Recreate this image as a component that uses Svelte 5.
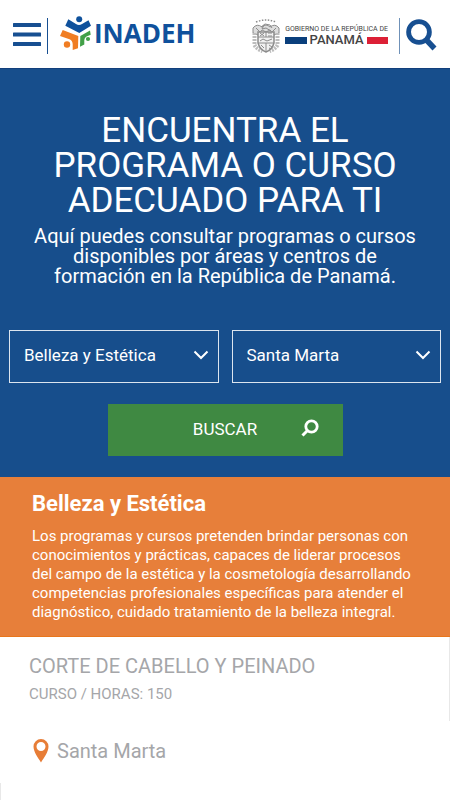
<script lang="ts">
	const areas = ['Belleza y Estética', 'Gastronomía', 'Tecnología'];
	const centers = ['Santa Marta', 'Tocumen', 'Colón'];

	const courses = [
		{ name: 'CORTE DE CABELLO Y PEINADO', kind: 'CURSO', hours: 150, center: 'Santa Marta' },
	];

	let area = $state(areas[0]);
	let center = $state(centers[0]);
</script>

<header class="topbar">
	<button class="topbar__button topbar__button--menu" type="button" aria-label="Menú">
		<svg width="28" height="24" viewBox="0 0 28 24" fill="#174f91">
			<rect width="28" height="4" y="0" rx="0.5" />
			<rect width="28" height="4" y="9.5" rx="0.5" />
			<rect width="28" height="4" y="19" rx="0.5" />
		</svg>
	</button>

	<a class="brand" href="#inicio">
		<svg width="32" height="34" viewBox="0 0 32 34" aria-hidden="true">
			<g fill="#0f519c">
				<circle cx="19.2" cy="3.2" r="3" />
				<path d="M8.3 3.3 16 8Q19 9.800 22 8L28.500 4.300 31 9.800 19.300 17 5.300 9.800Z" />
			</g>
			<g fill="#f07d23">
				<circle cx="7" cy="28.500" r="3.200" />
				<path d="M2.700 14 18.300 20 18 32.300 12.700 34V28.500Q12.700 24.500 9.500 23.300L0 20Z" />
			</g>
			<g fill="#41a047">
				<circle cx="28" cy="23" r="2.100" />
				<path d="M30 14.500 30.700 18.800 26.500 20.500Q24.500 21.500 24.300 24V28.500L20 30.700 20.300 20Z" />
			</g>
		</svg>
		<span class="brand__name">INADEH</span>
	</a>

	<a class="gov" href="#gobierno">
		<svg width="28" height="34" viewBox="0 0 28 34" fill="none" stroke="#8c8c8c" aria-hidden="true">
			<path d="M4 3Q14-1 24 3" stroke-width="1.500" stroke-dasharray="1.500 1.500" />
			<path d="M1 9Q5 4 10 8q4-4 8 0 5-4 9 1v5l-5 2-4-5-4 2-4-2-4 5-5-2Z" fill="#ddd" />
			<path d="M9 8 13 5 18 6 20 9M12 6 10 10 14 9 19 12M4 9l4 4m16-4-4 4" />
			<path d="M2.500 14v12q2 4 8 6m15-18v12q-2 4-8 6" stroke-width="4" stroke="#bdbdbd" stroke-dasharray="2 1" />
			<path d="M6 13h16v11q-2 7-8 9-6-2-8-9Z" fill="#f1f1f1" stroke-width="1.500" />
			<path d="M6 18h16M6 24h16M14 13v5M14 24v8" />
			<path d="m8 14 4 3m0-3-4 3m8-3h4m-4 3h4M8 22l3-2 4 2 5-2M9 26l3 3m5-3 3 2m-3 1 2 1" />
		</svg>
		<span class="gov__text">
			<span class="gov__line">GOBIERNO DE LA REPÚBLICA DE</span>
			<span class="gov__name">PANAMÁ</span>
		</span>
	</a>

	<button class="topbar__button topbar__button--search" type="button" aria-label="Buscar en el sitio">
		<svg width="31" height="32" viewBox="0 0 31 32" fill="none" stroke="#174f91">
			<circle cx="13" cy="13" r="10.400" stroke-width="4.800" />
			<path d="m20.500 21 8 8.500" stroke-width="5.500" />
		</svg>
	</button>
</header>

<main>
	<section class="finder">
		<h1>Encuentra el programa o curso adecuado para ti</h1>
		<p>Aquí puedes consultar programas o cursos disponibles por áreas y centros de formación en la República de Panamá.</p>

		<form onsubmit={(e) => e.preventDefault()}>
			<div class="finder__fields">
				<div class="field">
					<select bind:value={area} aria-label="Área">
						{#each areas as option}
							<option>{option}</option>
						{/each}
					</select>
					<svg width="16" height="10" viewBox="0 0 16 10" fill="none" stroke="#fff" stroke-width="2" aria-hidden="true">
						<path d="m1.500 1.500 6.500 6.500 6.500-6.500" />
					</svg>
				</div>
				<div class="field">
					<select bind:value={center} aria-label="Centro">
						{#each centers as option}
							<option>{option}</option>
						{/each}
					</select>
					<svg width="16" height="10" viewBox="0 0 16 10" fill="none" stroke="#fff" stroke-width="2" aria-hidden="true">
						<path d="m1.500 1.500 6.500 6.500 6.500-6.500" />
					</svg>
				</div>
			</div>

			<button class="submit" type="submit">
				<span>BUSCAR</span>
				<svg width="18" height="18" viewBox="0 0 18 18" fill="none" stroke="#fff" aria-hidden="true">
					<circle cx="10.500" cy="7.500" r="5.700" stroke-width="2.800" />
					<path d="m6.500 11.500-5 5" stroke-width="3" />
				</svg>
			</button>
		</form>
	</section>

	<section class="area">
		<h2>{area}</h2>
		<p>Los programas y cursos pretenden brindar personas con conocimientos y prácticas, capaces de liderar procesos del campo de la estética y la cosmetología desarrollando competencias profesionales específicas para atender el diagnóstico, cuidado tratamiento de la belleza integral.</p>
	</section>

	{#each courses as course}
		<article class="course">
			<div class="course__info">
				<h3>{course.name}</h3>
				<p>{course.kind} / HORAS: {course.hours}</p>
			</div>
			<p class="course__center">
				<svg width="16" height="24" viewBox="0 0 16 24" aria-hidden="true">
					<path fill="#e77d37" fill-rule="evenodd" d="M8 0a7.500 7.500 0 0 0-7.500 7.500C.5 13 5 18.500 8 23.500 11 18.500 15.500 13 15.500 7.500A7.500 7.500 0 0 0 8 0Zm0 3a4.500 4.500 0 1 1 0 9 4.500 4.500 0 0 1 0-9Z" />
				</svg>
				{course.center}
			</p>
			<div class="course__footer"></div>
		</article>
	{/each}
</main>

<style>
	:global(body) {
		margin: 0;
		background: #fff;
		color: #fff;
		font-family: Roboto, "Liberation Sans", sans-serif;
	}

	h1,
	h2,
	h3,
	p {
		margin: 0;
		font-weight: 400;
	}

	svg {
		display: block;
		flex: none;
	}

	a {
		text-decoration: none;
	}

	button,
	select {
		border-radius: 0;
		color: inherit;
		font: inherit;
	}

	.topbar {
		display: flex;
		align-items: center;
		box-sizing: border-box;
		height: 69px;
		padding: 4px 13px 0;
		border-bottom: 1px solid #123f7c;
	}

	.topbar__button {
		display: flex;
		align-items: center;
		box-sizing: border-box;
		height: 36px;
		padding: 0 0 3px;
		border: 0;
		background: none;
	}

	.topbar__button--menu {
		padding-right: 6px;
		border-right: 1px solid #174f91;
	}

	.topbar__button--search {
		margin-left: 11px;
		padding-left: 6px;
		border-left: 1px solid #6f91b8;
	}

	.brand {
		display: flex;
		align-items: center;
		gap: 2px;
		margin-left: 12px;
		padding-bottom: 6px;
	}

	.brand__name {
		color: #0f519c;
		font: 700 26px/32px "Open Sans", sans-serif;
	}

	.gov {
		display: flex;
		align-items: center;
		gap: 5px;
		margin-left: auto;
		color: #444;
	}

	.gov__text {
		display: grid;
	}

	.gov__line {
		font-size: 7px;
		line-height: 8px;
		white-space: nowrap;
	}

	.gov__name {
		display: flex;
		align-items: center;
		gap: 3px;
		font-size: 13px;
		font-weight: 500;
		line-height: 14px;

		&::before,
		&::after {
			flex: 1;
			height: 7px;
			background: #0a3f7c;
			content: "";
		}

		&::after {
			background: #dc2036;
		}
	}

	.finder {
		padding: 44px 9px 21px;
		background: #174e8c;
		text-align: center;

		h1 {
			max-width: 360px;
			margin: 0 auto;
			font-size: 35px;
			line-height: 35px;
			text-transform: uppercase;
		}

		p {
			max-width: 390px;
			margin: 8px auto 0;
			font-size: 20px;
			line-height: 20px;
		}
	}

	.finder__fields {
		display: grid;
		grid-template-columns: 1fr 1fr;
		gap: 13px;
		margin-top: 44px;
	}

	.field {
		display: grid;
		align-items: center;

		select,
		svg {
			grid-area: 1 / 1;
		}

		select {
			appearance: none;
			width: 100%;
			height: 53px;
			padding: 0 36px 3px 14px;
			border: 1px solid #dce5ef;
			background: transparent;
			font-size: 17px;
		}

		svg {
			justify-self: end;
			margin: 0 10px 3px 0;
			pointer-events: none;
		}
	}

	.submit {
		display: grid;
		grid-template-columns: 1fr auto 1fr;
		align-items: center;
		width: 235px;
		height: 52px;
		margin: 21px auto 0;
		padding: 0 24px 2px;
		border: 0;
		background: #3f8942;
		font-size: 17px;

		span {
			grid-column: 2;
		}

		svg {
			justify-self: end;
			margin-bottom: 3px;
		}
	}

	.area {
		padding: 14px 32px;
		border-bottom: 1px solid #e8761c;
		background: #e77f3a;

		h2 {
			font-size: 22px;
			font-weight: 700;
			line-height: 26px;
		}

		p {
			margin-top: 10px;
			font-size: 15px;
			line-height: 19px;
		}
	}

	.course {
		color: #a5a6a9;
	}

	.course__info {
		padding: 17px 29px 18px;
		border-right: 1px solid #e8e8e8;

		h3 {
			font-size: 20px;
			line-height: 24px;
		}

		p {
			margin-top: 7px;
			font-size: 15px;
			line-height: 18px;
		}
	}

	.course__center {
		display: flex;
		align-items: center;
		gap: 8px;
		padding: 18px 29px 20px 33px;
		font-size: 20px;
		line-height: 24px;
	}

	.course__footer {
		height: 17px;
		border-left: 1px solid #e8e8e8;
	}
</style>
